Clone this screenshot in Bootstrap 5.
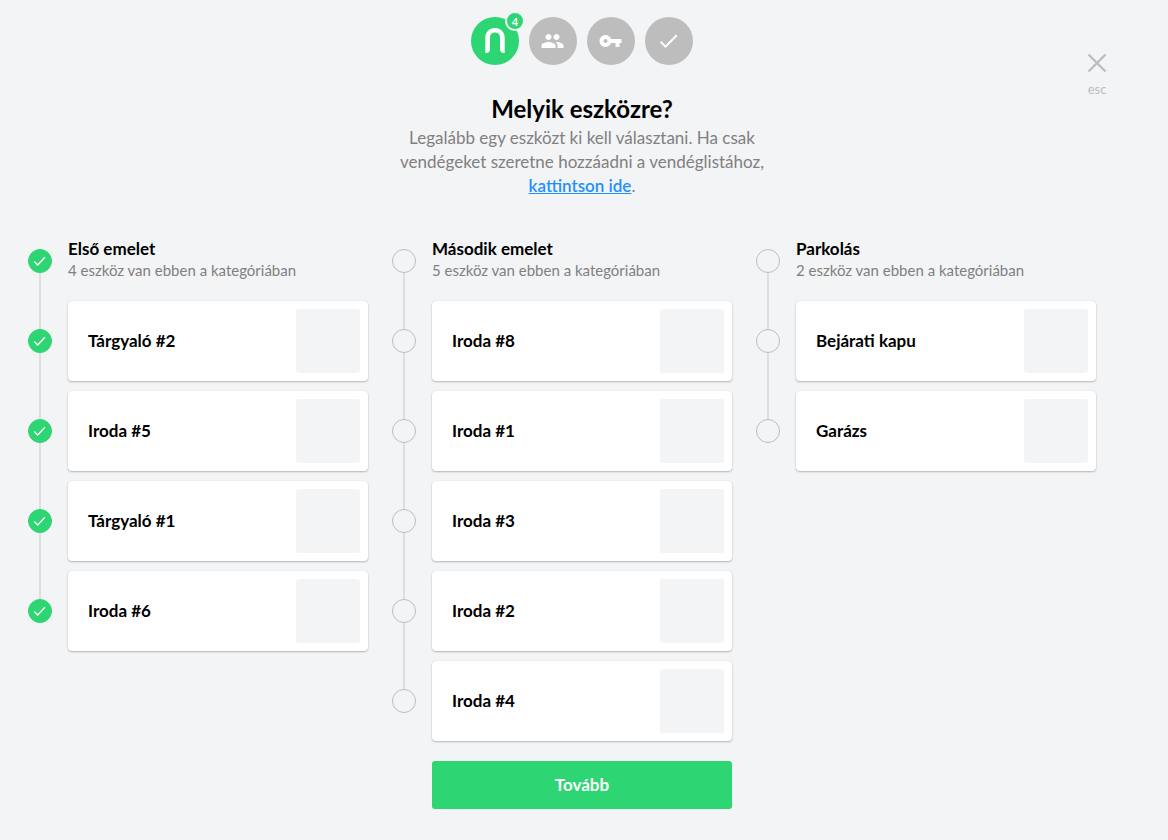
<!DOCTYPE html>
<html lang="hu">
<head>
<meta charset="utf-8">
<meta name="viewport" content="width=device-width, initial-scale=1">
<title>Melyik eszközre?</title>
<link href="https://cdn.jsdelivr.net/npm/bootstrap@5.3.0/dist/css/bootstrap.min.css" rel="stylesheet">
<style>
  :root { --ink: #000; --soft: #808080; --idle: #bdbdbd; --accent: #2ed573; --page: #f3f4f6; }
  body { background: var(--page); color: var(--ink); font-family: Lato, sans-serif; font-size: 17px; line-height: 24px; }
  .wizard { padding: 17px 32px 31px 28px; }
  .wizard-head { display: grid; grid-template-columns: 1fr minmax(0, 400px) 1fr; }
  .steps { gap: 10px; }
  .step { width: 48px; height: 48px; border-radius: 50%; background: var(--idle); border: 0; padding: 0; }
  .step svg { display: block; }
  .step.current { background: var(--accent); }
  .step-count { top: -6px; right: -6px; width: 20px; height: 20px; border: 2px solid var(--page); border-radius: 50%; background: var(--accent); color: #fff; font-size: 11px; font-weight: 700; line-height: 17px; }
  .close-btn { width: 78px; margin-top: 36px; color: var(--idle); font-size: 13px; line-height: 16px; }
  .title { font-size: 24px; line-height: 34px; font-weight: 700; margin: 27px 0 0; }
  .soft { color: var(--soft); }
  .intro a { color: #1e90ff; font-weight: 600; }
  .groups { margin-top: 41px; padding-right: 40px; display: grid; grid-template-columns: repeat(3, minmax(0, 1fr)); gap: 24px; }
  .device { gap: 16px; min-height: 80px; margin-bottom: 10px; }
  .device:first-child { min-height: 44px; height: 44px; margin-bottom: 18px; }
  .device:last-child { margin-bottom: 0; }
  .rail { position: relative; align-self: stretch; width: 24px; }
  .device:not(:last-child) .rail::before { content: ""; position: absolute; left: 11px; top: 50%; width: 2px; height: calc(100% + 10px); background: #dddee0; }
  .device:first-child .rail::before { height: 80px !important; }
  .tick.form-check-input { position: relative; width: 24px; height: 24px; margin: 0; border: 1px solid var(--idle); border-radius: 50%; background-color: var(--page); }
  .tick.form-check-input:checked { background-color: var(--accent); border-color: var(--accent); background-size: 24px 24px; background-position: center;
    background-image: url("data:image/svg+xml,%3Csvg xmlns='http://www.w3.org/2000/svg' viewBox='0 0 24 24'%3E%3Cpath d='M6.2 12.4l3.500 3.500 7.200-7.600' fill='none' stroke='%23fff' stroke-width='1.4'/%3E%3C/svg%3E"); }
  .group-label { padding-bottom: 4px; }
  .group-name { font-weight: 700; line-height: 22px; }
  .group-note { font-size: 15px; line-height: 20px; }
  .tile { min-height: 80px; padding: 8px 8px 8px 20px; border-radius: 4px; background: #fff; font-weight: 700; box-shadow: 0 1px 2px rgba(0,0,0,.25), 0 0 1px rgba(0,0,0,.12); }
  .thumb { width: 64px; height: 64px; border-radius: 3px; background: var(--page); }
  .next-btn { width: 300px; height: 48px; margin-top: 20px; border: 0; border-radius: 3px; background: var(--accent); color: #fff; font-size: 17px; font-weight: 700; }
</style>
</head>
<body>
<main class="wizard">
  <header class="wizard-head text-center">
    <div></div>
    <div>
      <nav class="steps d-flex justify-content-center" aria-label="Lépések">
        <button type="button" class="step current position-relative" aria-label="Eszközök">
          <svg width="48" height="48" viewBox="0 0 48 48"><path fill="#fff" d="M14.3 36V20.8C14.3 15 18.400 11 24 11S33.700 15 33.700 20.800V36C30.900 36 29 35 29 32.500V20.500C29 17.300 27 15.600 24 15.600S19 17.300 19 20.500V32.500C19 35 17.100 36 14.300 36Z"/></svg>
          <span class="step-count position-absolute">4</span>
        </button>
        <button type="button" class="step" aria-label="Vendégek">
          <svg width="48" height="48" viewBox="-11.500 -12 48 48" fill="#fff"><path d="M16 11c1.660 0 2.990-1.340 2.990-3S17.660 5 16 5s-3 1.340-3 3 1.340 3 3 3zm-8 0c1.660 0 2.990-1.340 2.990-3S9.660 5 8 5 5 6.340 5 8s1.340 3 3 3zm0 2c-2.330 0-7 1.170-7 3.500V19h14v-2.500c0-2.330-4.670-3.500-7-3.500zm8 0c-.29 0-.62.020-.97.050 1.160.84 1.970 1.970 1.970 3.450V19h6v-2.500c0-2.330-4.670-3.500-7-3.500z"/></svg>
        </button>
        <button type="button" class="step" aria-label="Kulcs">
          <svg width="48" height="48" viewBox="-11.500 -12 48 48" fill="#fff"><path d="M12.650 10C11.830 7.670 9.610 6 7 6c-3.310 0-6 2.690-6 6s2.690 6 6 6c2.610 0 4.830-1.670 5.650-4H17v4h4v-4h2v-4H12.650zM7 14c-1.100 0-2-.9-2-2s.9-2 2-2 2 .9 2 2-.9 2-2 2z"/></svg>
        </button>
        <button type="button" class="step" aria-label="Kész">
          <svg width="48" height="48" viewBox="-11.500 -12 48 48" fill="#fff"><path d="M9 16.170L4.830 12l-1.420 1.410L9 19 21 7l-1.410-1.410z"/></svg>
        </button>
      </nav>
      <h1 class="title">Melyik eszközre?</h1>
      <p class="intro soft mb-0">Legalább egy eszközt ki kell választani. Ha csak vendégeket szeretne hozzáadni a vendéglistához, <a href="#">kattintson ide</a>.</p>
    </div>
    <div class="text-end">
      <button type="button" class="close-btn border-0 bg-transparent p-0 text-center">
        <svg class="d-block mx-auto mb-2" width="20" height="20" viewBox="0 0 20 20"><path d="M1.500 1.500l17 17M18.500 1.500l-17 17" fill="none" stroke="currentColor" stroke-width="2.400"/></svg>
        <span class="d-block">esc</span>
      </button>
    </div>
  </header>

  <form>
    <div class="groups">
      <section>
        <div class="device d-flex align-items-center">
          <div class="rail d-flex align-items-center"><input class="tick form-check-input" type="checkbox" id="g1" checked></div>
          <label for="g1" class="group-label"><span class="group-name d-block">Első emelet</span><span class="group-note soft d-block">4 eszköz van ebben a kategóriában</span></label>
        </div>
        <div class="device d-flex align-items-center">
          <div class="rail d-flex align-items-center"><input class="tick form-check-input" type="checkbox" id="d11" checked></div>
          <label for="d11" class="tile d-flex align-items-center justify-content-between flex-fill">Tárgyaló #2<span class="thumb"></span></label>
        </div>
        <div class="device d-flex align-items-center">
          <div class="rail d-flex align-items-center"><input class="tick form-check-input" type="checkbox" id="d12" checked></div>
          <label for="d12" class="tile d-flex align-items-center justify-content-between flex-fill">Iroda #5<span class="thumb"></span></label>
        </div>
        <div class="device d-flex align-items-center">
          <div class="rail d-flex align-items-center"><input class="tick form-check-input" type="checkbox" id="d13" checked></div>
          <label for="d13" class="tile d-flex align-items-center justify-content-between flex-fill">Tárgyaló #1<span class="thumb"></span></label>
        </div>
        <div class="device d-flex align-items-center">
          <div class="rail d-flex align-items-center"><input class="tick form-check-input" type="checkbox" id="d14" checked></div>
          <label for="d14" class="tile d-flex align-items-center justify-content-between flex-fill">Iroda #6<span class="thumb"></span></label>
        </div>
      </section>
      <section>
        <div class="device d-flex align-items-center">
          <div class="rail d-flex align-items-center"><input class="tick form-check-input" type="checkbox" id="g2"></div>
          <label for="g2" class="group-label"><span class="group-name d-block">Második emelet</span><span class="group-note soft d-block">5 eszköz van ebben a kategóriában</span></label>
        </div>
        <div class="device d-flex align-items-center">
          <div class="rail d-flex align-items-center"><input class="tick form-check-input" type="checkbox" id="d21"></div>
          <label for="d21" class="tile d-flex align-items-center justify-content-between flex-fill">Iroda #8<span class="thumb"></span></label>
        </div>
        <div class="device d-flex align-items-center">
          <div class="rail d-flex align-items-center"><input class="tick form-check-input" type="checkbox" id="d22"></div>
          <label for="d22" class="tile d-flex align-items-center justify-content-between flex-fill">Iroda #1<span class="thumb"></span></label>
        </div>
        <div class="device d-flex align-items-center">
          <div class="rail d-flex align-items-center"><input class="tick form-check-input" type="checkbox" id="d23"></div>
          <label for="d23" class="tile d-flex align-items-center justify-content-between flex-fill">Iroda #3<span class="thumb"></span></label>
        </div>
        <div class="device d-flex align-items-center">
          <div class="rail d-flex align-items-center"><input class="tick form-check-input" type="checkbox" id="d24"></div>
          <label for="d24" class="tile d-flex align-items-center justify-content-between flex-fill">Iroda #2<span class="thumb"></span></label>
        </div>
        <div class="device d-flex align-items-center">
          <div class="rail d-flex align-items-center"><input class="tick form-check-input" type="checkbox" id="d25"></div>
          <label for="d25" class="tile d-flex align-items-center justify-content-between flex-fill">Iroda #4<span class="thumb"></span></label>
        </div>
      </section>
      <section>
        <div class="device d-flex align-items-center">
          <div class="rail d-flex align-items-center"><input class="tick form-check-input" type="checkbox" id="g3"></div>
          <label for="g3" class="group-label"><span class="group-name d-block">Parkolás</span><span class="group-note soft d-block">2 eszköz van ebben a kategóriában</span></label>
        </div>
        <div class="device d-flex align-items-center">
          <div class="rail d-flex align-items-center"><input class="tick form-check-input" type="checkbox" id="d31"></div>
          <label for="d31" class="tile d-flex align-items-center justify-content-between flex-fill">Bejárati kapu<span class="thumb"></span></label>
        </div>
        <div class="device d-flex align-items-center">
          <div class="rail d-flex align-items-center"><input class="tick form-check-input" type="checkbox" id="d32"></div>
          <label for="d32" class="tile d-flex align-items-center justify-content-between flex-fill">Garázs<span class="thumb"></span></label>
        </div>
      </section>
    </div>
    <div class="text-center">
      <button type="submit" class="next-btn">Tovább</button>
    </div>
  </form>
</main>
<script src="https://cdn.jsdelivr.net/npm/bootstrap@5.3.0/dist/js/bootstrap.bundle.min.js"></script>
</body>
</html>
